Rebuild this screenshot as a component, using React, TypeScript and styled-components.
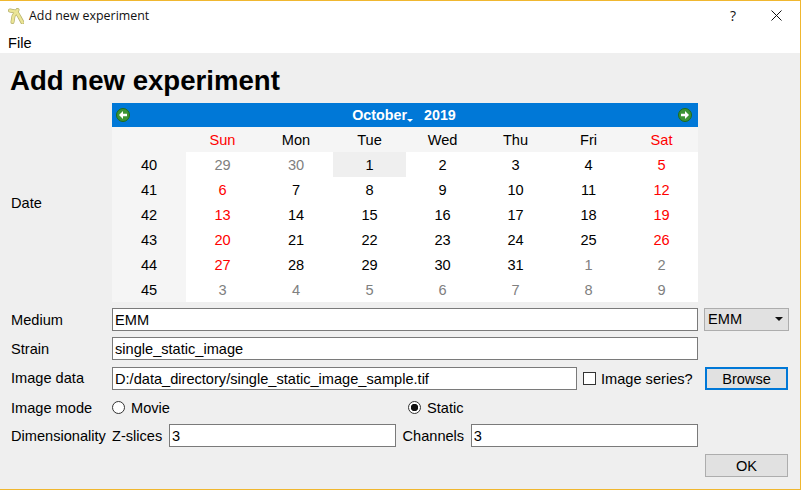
import React from 'react';
import styled, { createGlobalStyle } from 'styled-components';

const GlobalStyle = createGlobalStyle`
    html, body {
        margin: 0;
        padding: 0;
        background: #efefef;
    }
    * {
        box-sizing: border-box;
    }
`;

const WEEKDAYS = ['Sun', 'Mon', 'Tue', 'Wed', 'Thu', 'Fri', 'Sat'];

const WEEKS = [
    { week: 40, days: [29, 30, 1, 2, 3, 4, 5] },
    { week: 41, days: [6, 7, 8, 9, 10, 11, 12] },
    { week: 42, days: [13, 14, 15, 16, 17, 18, 19] },
    { week: 43, days: [20, 21, 22, 23, 24, 25, 26] },
    { week: 44, days: [27, 28, 29, 30, 31, 1, 2] },
    { week: 45, days: [3, 4, 5, 6, 7, 8, 9] },
];

const AppIcon = () => (
    <svg width="16" height="16" viewBox="0 0 16 16">
        <g fill="none" strokeLinecap="round" strokeLinejoin="round">
            <g stroke="#b5b06c" strokeWidth="4">
                <path d="M2 2.5 L7 3.5" />
                <path d="M9.5 2 L5.5 8 L4.5 14" />
                <path d="M8.5 4 L11.5 9 L14.5 14.5" />
            </g>
            <g stroke="#ebe596" strokeWidth="2.6">
                <path d="M2 2.5 L7 3.5" />
                <path d="M9.5 2 L5.5 8 L4.5 14" />
                <path d="M8.5 4 L11.5 9 L14.5 14.5" />
            </g>
        </g>
    </svg>
);

const NavArrow = ({ flip }: { flip?: boolean }) => (
    <svg width="14" height="14" viewBox="0 0 14 14">
        <circle cx="7" cy="7" r="6.5" fill="#3c9434" stroke="#1f6b1c" strokeWidth="1" />
        <path
            d={flip ? 'M3 5.8 H7 V3 L11 7 L7 11 V8.2 H3 Z' : 'M11 5.8 H7 V3 L3 7 L7 11 V8.2 H11 Z'}
            fill="#fff"
        />
    </svg>
);

const App = () => (
    <Window>
        <GlobalStyle />
        <TitleBar>
            <TitleGroup>
                <AppIcon />
                <TitleText>Add new experiment</TitleText>
            </TitleGroup>
            <TitleButtons>
                <HelpButton>?</HelpButton>
                <svg width="11" height="11" viewBox="0 0 11 11">
                    <path d="M0.5 0.5 L10.5 10.5 M10.5 0.5 L0.5 10.5" stroke="#111" strokeWidth="1" />
                </svg>
            </TitleButtons>
        </TitleBar>
        <MenuBar>File</MenuBar>
        <Content>
            <Heading>Add new experiment</Heading>
            <DateRow>
                <div>Date</div>
                <Calendar>
                    <NavBar>
                        <NavArrow />
                        <MonthTitle>
                            <MonthName>October</MonthName>
                            <span>2019</span>
                        </MonthTitle>
                        <NavArrow flip />
                    </NavBar>
                    <CalendarGrid>
                        <WeekHead />
                        {WEEKDAYS.map((name, i) => (
                            <DayHead key={name} $weekend={i === 0 || i === 6}>
                                {name}
                            </DayHead>
                        ))}
                        {WEEKS.map(({ week, days }, row) => (
                            <React.Fragment key={week}>
                                <WeekHead>{week}</WeekHead>
                                {days.map((day, col) => {
                                    const outside = (row === 0 && day > 20) || (row >= 4 && day < 20);
                                    return (
                                        <DayCell
                                            key={col}
                                            $outside={outside}
                                            $weekend={col === 0 || col === 6}
                                            $today={row === 0 && day === 1}
                                        >
                                            {day}
                                        </DayCell>
                                    );
                                })}
                            </React.Fragment>
                        ))}
                    </CalendarGrid>
                </Calendar>
            </DateRow>
            <Form>
                <div>Medium</div>
                <InputRow>
                    <TextInput readOnly value="EMM" />
                    <Combo>
                        EMM
                        <ComboArrow />
                    </Combo>
                </InputRow>
                <div>Strain</div>
                <InputRow>
                    <TextInput readOnly value="single_static_image" />
                    <SideSlot />
                </InputRow>
                <div>Image data</div>
                <InputRow>
                    <TextInput readOnly value="D:/data_directory/single_static_image_sample.tif" />
                    <CheckLabel>
                        <CheckBox />
                        Image series?
                    </CheckLabel>
                    <SideSlot>
                        <PushButton $focused>Browse</PushButton>
                    </SideSlot>
                </InputRow>
                <ModeLabel>Image mode</ModeLabel>
                <RadioRow>
                    <RadioLabel>
                        <Radio />
                        Movie
                    </RadioLabel>
                    <RadioLabel>
                        <Radio $checked />
                        Static
                    </RadioLabel>
                </RadioRow>
                <div>Dimensionality</div>
                <InputRow>
                    <DimGroup>
                        <InlineLabel>Z-slices</InlineLabel>
                        <TextInput readOnly value="3" />
                        <InlineLabel>Channels</InlineLabel>
                        <TextInput readOnly value="3" />
                    </DimGroup>
                    <SideSlot />
                </InputRow>
            </Form>
            <Footer>
                <PushButton>OK</PushButton>
            </Footer>
        </Content>
    </Window>
);

export default App;

const Window = styled.div`
    width: 801px;
    height: 490px;
    display: flex;
    flex-direction: column;
    overflow: hidden;
    border: 1px solid #f0b72f;
    border-left: 0;
    background: #efefef;
    font-family: 'Liberation Sans', Arial, sans-serif;
    font-size: 14.6px;
    color: #000;
`;

const TitleBar = styled.div`
    height: 29px;
    flex: none;
    display: flex;
    align-items: center;
    justify-content: space-between;
    padding: 0 18px 0 8px;
    background: #fff;
`;

const TitleGroup = styled.div`
    display: flex;
    align-items: center;
    gap: 5px;
`;

const TitleText = styled.span`
    font-family: 'Open Sans', 'Noto Sans', sans-serif;
    font-size: 12.4px;
    color: #111;
`;

const TitleButtons = styled.div`
    display: flex;
    align-items: center;
    gap: 35px;
`;

const HelpButton = styled.span`
    font-family: 'Open Sans', sans-serif;
    font-size: 14px;
    color: #111;
`;

const MenuBar = styled.div`
    height: 23px;
    flex: none;
    padding: 5px 0 0 8px;
    background: #fff;
    line-height: 17px;
`;

const Content = styled.div`
    flex: 1;
    display: flex;
    flex-direction: column;
    padding: 0 11px;
`;

const Heading = styled.h1`
    margin: 0 0 0 -1px;
    height: 50px;
    padding-top: 12px;
    font-size: 27.6px;
    line-height: 32px;
    font-weight: bold;
`;

const DateRow = styled.div`
    display: grid;
    grid-template-columns: 101px 586px;
    align-items: center;
`;

const Calendar = styled.div`
    display: flex;
    flex-direction: column;
`;

const NavBar = styled.div`
    height: 24px;
    display: flex;
    align-items: center;
    justify-content: space-between;
    padding: 0 6px 0 4px;
    background: #0078d7;
`;

const MonthTitle = styled.div`
    display: flex;
    gap: 17px;
    font-size: 14.3px;
    font-weight: bold;
    color: #fff;
`;

const MonthName = styled.span`
    position: relative;

    &::after {
        content: '';
        position: absolute;
        right: -6px;
        bottom: 1px;
        border-left: 3px solid transparent;
        border-right: 3px solid transparent;
        border-top: 3px solid #fff;
    }
`;

const CalendarGrid = styled.div`
    display: grid;
    grid-template-columns: 74px 73px 74px repeat(5, 73px);
    grid-auto-rows: 25px;
`;

const WeekHead = styled.div`
    display: flex;
    align-items: center;
    justify-content: center;
    background: #f5f5f5;
`;

const DayHead = styled(WeekHead)<{ $weekend?: boolean }>`
    color: ${(p) => (p.$weekend ? '#ff0000' : '#000')};
`;

const DayCell = styled.div<{ $outside?: boolean; $weekend?: boolean; $today?: boolean }>`
    display: flex;
    align-items: center;
    justify-content: center;
    background: ${(p) => (p.$today ? '#efefef' : '#fff')};
    color: ${(p) => (p.$outside ? '#808080' : p.$weekend ? '#ff0000' : '#000')};
`;

const Form = styled.div`
    margin-top: 6px;
    display: grid;
    grid-template-columns: 101px 1fr;
    grid-template-rows: 23px 23px 24px 22px 23px;
    row-gap: 6px;
    align-items: center;
`;

const ModeLabel = styled.div`
    padding-top: 1px;
`;

const InputRow = styled.div`
    display: flex;
    align-items: center;
    height: 23px;
    align-self: end;
`;

const TextInput = styled.input`
    flex: 1;
    min-width: 0;
    height: 23px;
    padding: 0 2px;
    border: 1px solid #7a7a7a;
    border-radius: 0;
    outline: none;
    background: #fff;
    font: inherit;
    color: #000;
`;

const SideSlot = styled.div`
    flex: none;
    width: 85px;
    margin-left: 6px;
    display: flex;
    justify-content: flex-start;
`;

const Combo = styled.div`
    flex: none;
    width: 85px;
    height: 23px;
    margin-left: 6px;
    position: relative;
    padding-left: 3px;
    line-height: 21px;
    border: 1px solid #adadad;
    background: #e1e1e1;
`;

const ComboArrow = styled.span`
    position: absolute;
    right: 5px;
    top: 8px;
    border-left: 4px solid transparent;
    border-right: 4px solid transparent;
    border-top: 4px solid #111;
`;

const CheckLabel = styled.label`
    flex: none;
    width: 115px;
    margin-left: 6px;
    display: flex;
    align-items: center;
    gap: 5px;
`;

const CheckBox = styled.span`
    flex: none;
    width: 13px;
    height: 13px;
    border: 1px solid #333;
    background: #fff;
`;

const PushButton = styled.div<{ $focused?: boolean }>`
    width: 83px;
    height: 23px;
    margin-left: 1px;
    display: flex;
    align-items: center;
    justify-content: center;
    background: #e1e1e1;
    border: ${(p) => (p.$focused ? '2px solid #0078d7' : '1px solid #adadad')};
`;

const RadioRow = styled.div`
    display: grid;
    grid-template-columns: 296px 1fr;
    padding-top: 1px;
`;

const RadioLabel = styled.label`
    display: flex;
    align-items: center;
    gap: 6px;
`;

const Radio = styled.span<{ $checked?: boolean }>`
    width: 13px;
    height: 13px;
    border: 1px solid #333;
    border-radius: 50%;
    background: ${(p) =>
        p.$checked ? 'radial-gradient(circle, #111 0 3.4px, #fff 4px)' : '#fff'};
`;

const DimGroup = styled.div`
    flex: 1;
    display: flex;
    align-items: center;
`;

const InlineLabel = styled.span`
    margin-right: 6.6px;

    & ~ & {
        margin-left: 6.4px;
    }
`;

const Footer = styled.div`
    margin-top: 7px;
    padding-right: 1px;
    display: flex;
    justify-content: flex-end;
`;
